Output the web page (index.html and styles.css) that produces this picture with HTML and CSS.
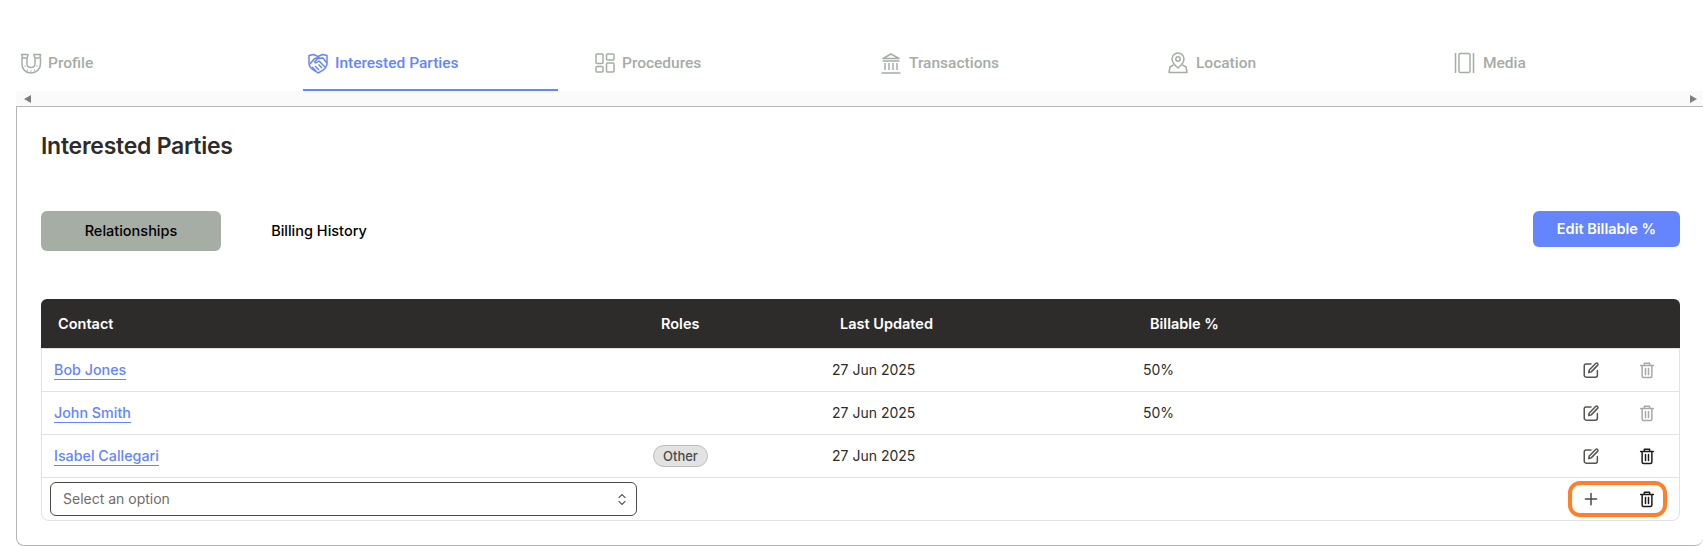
FILE: index.html
```html
<!DOCTYPE html>
<html lang="en">
<head>
<meta charset="utf-8">
<title>Interested Parties</title>
<link rel="stylesheet" href="styles.css">
</head>
<body>
<nav class="tabs">
  <a class="tab"><svg class="ico" viewBox="0 0 24 24"><path d="M2.500 3.500h6.500l-.5 2.500-.5 1v5.500c0 2.500 1.800 4 4 4s4-1.500 4-4V7l-.5-1-.5-2.500h6.500l-.5 2.500.5 1.500v5c0 5.500-4 9.500-9.500 9.500S3 18 3 13V7.500L3.500 6z"/><path d="M3.500 7h4.500M16 7h4.500"/><circle class="dot" cx="6" cy="15" r=".7"/><circle class="dot" cx="18" cy="15" r=".7"/><circle class="dot" cx="8.500" cy="19" r=".7"/><circle class="dot" cx="15.500" cy="19" r=".7"/><circle class="dot" cx="12" cy="20" r=".7"/></svg>Profile</a>
  <a class="tab active"><svg class="ico" viewBox="0 0 24 24"><path d="M3 4.500l4.500-1 4.500 2 4.500-2 4.500 1v8c0 4.500-4.500 7.500-9 9.500l-2-1.500c-4-2-7-4-7-8z"/><path d="M4 13l4.500-5.500 5-1M21 12l-4-5-5.500.5-3 3.500 1.500 1 3-2 6 6M10 20l-4-4M13 19l-4-4M16 17l-3.500-3.500"/></svg>Interested Parties</a>
  <a class="tab"><svg class="ico" viewBox="0 0 24 24"><rect x="3" y="3" width="7" height="9.500" rx="1"/><rect x="13.500" y="3" width="7.500" height="6" rx="1"/><rect x="3" y="15.500" width="7" height="5.500" rx="1"/><rect x="13.500" y="12" width="7.500" height="9" rx="1"/></svg>Procedures</a>
  <a class="tab"><svg class="ico" viewBox="0 0 24 24"><path d="M3 7.500L11 3l8 4.500z"/><path d="M2.500 10h17M5 12v7M9 12v7M13 12v7M17 12v7M1.500 22h19"/></svg>Transactions</a>
  <a class="tab"><svg class="ico" viewBox="0 0 24 24"><path d="M11 2a6 6 0 0 1 6 6c0 4-6 9-6 9s-6-5-6-9a6 6 0 0 1 6-6z"/><circle cx="11" cy="8" r="2.200"/><path d="M6.500 14l-3.500 2-1 5.500h18l-1-5.500-3.500-2"/></svg>Location</a>
  <a class="tab"><svg class="ico" viewBox="0 0 24 24"><rect x="5" y="2.500" width="11" height="19" rx="1.500"/><path d="M1.500 2v20M19.500 2v20"/></svg>Media</a>
</nav>
<div class="scrollbar"><span class="arrow-left"></span><span class="arrow-right"></span></div>
<main class="card">
  <h1 class="title">Interested Parties</h1>
  <div class="toolbar">
    <button class="seg seg-on">Relationships</button>
    <button class="seg seg-off">Billing History</button>
    <button class="edit">Edit Billable %</button>
  </div>
  <section class="table">
    <div class="row head">
      <div class="h-contact">Contact</div><div>Roles</div><div>Last Updated</div><div>Billable %</div>
    </div>
    <div class="row body">
      <div class="name"><a class="link">Bob Jones</a></div><div></div><div>27 Jun 2025</div><div>50%</div>
      <div class="actions"><svg class="act act-edit" viewBox="0 0 24 24"><path d="M20.500 12.500V19a2.500 2.500 0 0 1-2.500 2.500H5.500A2.500 2.500 0 0 1 3 19V6.500A2.500 2.500 0 0 1 5.500 4H12"/><path d="M9 15.500l.7-3.500L18.500 3a1.800 1.800 0 0 1 2.500 2.500L12.300 14.500z"/></svg><svg class="act act-faded" viewBox="0 0 24 24"><path d="M3.500 6h17M8.500 6V3h7v3M5.500 6v14a2 2 0 0 0 2 2h9a2 2 0 0 0 2-2V6M10 10v8M14 10v8"/></svg></div>
    </div>
    <div class="row body">
      <div class="name"><a class="link">John Smith</a></div><div></div><div>27 Jun 2025</div><div>50%</div>
      <div class="actions"><svg class="act act-edit" viewBox="0 0 24 24"><path d="M20.500 12.500V19a2.500 2.500 0 0 1-2.500 2.500H5.500A2.500 2.500 0 0 1 3 19V6.500A2.500 2.500 0 0 1 5.500 4H12"/><path d="M9 15.500l.7-3.500L18.500 3a1.800 1.800 0 0 1 2.500 2.500L12.300 14.500z"/></svg><svg class="act act-faded" viewBox="0 0 24 24"><path d="M3.500 6h17M8.500 6V3h7v3M5.500 6v14a2 2 0 0 0 2 2h9a2 2 0 0 0 2-2V6M10 10v8M14 10v8"/></svg></div>
    </div>
    <div class="row body">
      <div class="name"><a class="link">Isabel Callegari</a></div><div><span class="badge">Other</span></div><div>27 Jun 2025</div><div></div>
      <div class="actions"><svg class="act act-edit" viewBox="0 0 24 24"><path d="M20.500 12.500V19a2.500 2.500 0 0 1-2.500 2.500H5.500A2.500 2.500 0 0 1 3 19V6.500A2.500 2.500 0 0 1 5.500 4H12"/><path d="M9 15.500l.7-3.500L18.500 3a1.800 1.800 0 0 1 2.500 2.500L12.300 14.500z"/></svg><svg class="act act-dark" viewBox="0 0 24 24"><path d="M3.500 6h17M8.500 6V3h7v3M5.500 6v14a2 2 0 0 0 2 2h9a2 2 0 0 0 2-2V6M10 10v8M14 10v8"/></svg></div>
    </div>
    <div class="row body">
      <div class="select-cell"><div class="select"><span>Select an option</span><svg class="chev" viewBox="0 0 12 18"><path d="M2 7l4-4 4 4M2 11l4 4 4-4"/></svg></div></div><div></div><div></div><div></div>
      <div class="actions"><svg class="act act-plus" viewBox="0 0 24 24"><path d="M12 4.500v15M4.500 12h15"/></svg><svg class="act act-dark" viewBox="0 0 24 24"><path d="M3.500 6h17M8.500 6V3h7v3M5.500 6v14a2 2 0 0 0 2 2h9a2 2 0 0 0 2-2V6M10 10v8M14 10v8"/></svg></div>
    </div>
    <div class="marker"></div>
  </section>
</main>
</body>
</html>
```
FILE: styles.css
```css
*{box-sizing:border-box}
html,body{margin:0;padding:0;background:#fff}
body{width:1703px;height:546px;overflow:hidden;font-family:Inter,"Liberation Sans",sans-serif;color:#2e2c2a}
.tabs{display:grid;grid-template-columns:repeat(6,287px);height:91px;padding-left:16px;padding-top:46px}
.tab{display:flex;align-items:center;gap:5px;font:500 15.500px/16px Roboto,sans-serif;color:#a5ada5;height:45px;padding:0 0 9px 3px;margin-right:32px;border-bottom:2px solid transparent}
.tab .ico{width:24px;height:24px;fill:none;stroke:currentColor;stroke-width:1.500;stroke-linejoin:round;flex:none}
.tab .dot{fill:currentColor;stroke:none}
.tab.active{color:#6585ff;border-bottom-color:#6585ff}
.scrollbar{height:15px;margin-left:16px;background:#fafafa;display:flex;justify-content:space-between;align-items:center;padding:0 6px 0 8px}
.arrow-left{border:4px solid transparent;border-left:0;border-right:7px solid #7e7e7e}
.arrow-right{border:4px solid transparent;border-right:0;border-left:7px solid #7e7e7e}
.card{margin-left:16px;height:440px;border:1px solid #b5b5b5;border-right:0;border-radius:0 0 8px 8px;padding:0 23px 0 24px}
.title{margin:0;padding-top:25px;height:104px;font:600 23px/28px Inter,sans-serif;letter-spacing:-.25px;color:#2e2c2a}
.toolbar{display:flex;align-items:flex-start;height:88px}
.seg{width:180px;height:40px;border:0;border-radius:6px;background:transparent;font:500 14.500px/20px Inter,sans-serif;color:#000;padding:0}
.seg-on{background:#a5ada5}
.seg-off{margin-left:8px}
.edit{margin-left:auto;width:147px;height:36px;border:0;border-radius:6px;background:#6585ff;color:#fff;font:600 14.500px/20px Inter,sans-serif}
.table{width:1639px;height:222px;border:1px solid #e2e2e2;border-top:0;border-radius:8px;position:relative}
.row{display:grid;align-items:center}
.head{grid-template-columns:604px 179px 310px 1fr;height:49px;background:#2e2c2a;color:#fff;border-radius:6px 6px 0 0;font:600 14.500px/20px Inter,sans-serif;margin:0 -1px}
.head div{padding-left:16px}
.head .h-contact{padding-left:17px}
.body{grid-template-columns:611px 179px 311px 1fr 130px;height:43px;border-top:1px solid #e2e2e2;font:400 14px/20px Inter,sans-serif}
.name{padding-left:12px}
.link{color:#6585ff;font-weight:500;font-size:14.300px;border-bottom:1px solid #6585ff;padding-bottom:1px}
.badge{display:inline-block;height:22px;line-height:20px;padding:0 9px;border-radius:11px;background:#e2e2e2;border:1px solid #bdbdbd;font-size:13px;font-weight:500;color:#4a4a46}
.select-cell{padding-left:8px}
.select{width:587px;height:34px;border:1px solid #4a4a46;border-radius:6px;display:flex;align-items:center;justify-content:space-between;padding:0 9px 0 12px;color:#6f6d6a}
.chev{width:10px;height:15px;fill:none;stroke:#4a4a46;stroke-width:1.300}
.actions{display:flex;justify-content:flex-end;gap:38px;padding-right:23px;align-items:center}
.act{width:18px;height:18px;fill:none;stroke-width:2;stroke-linecap:round;stroke-linejoin:round}
.act-edit{stroke:#555552}
.act-faded{stroke:#a8a8a8}
.act-dark{stroke:#1c1c1c}
.act-plus{stroke:#4a4a46}
.marker{position:absolute;right:12px;bottom:3px;width:99px;height:36px;border:4px solid #ff7f27;border-radius:12px;pointer-events:none}
```
